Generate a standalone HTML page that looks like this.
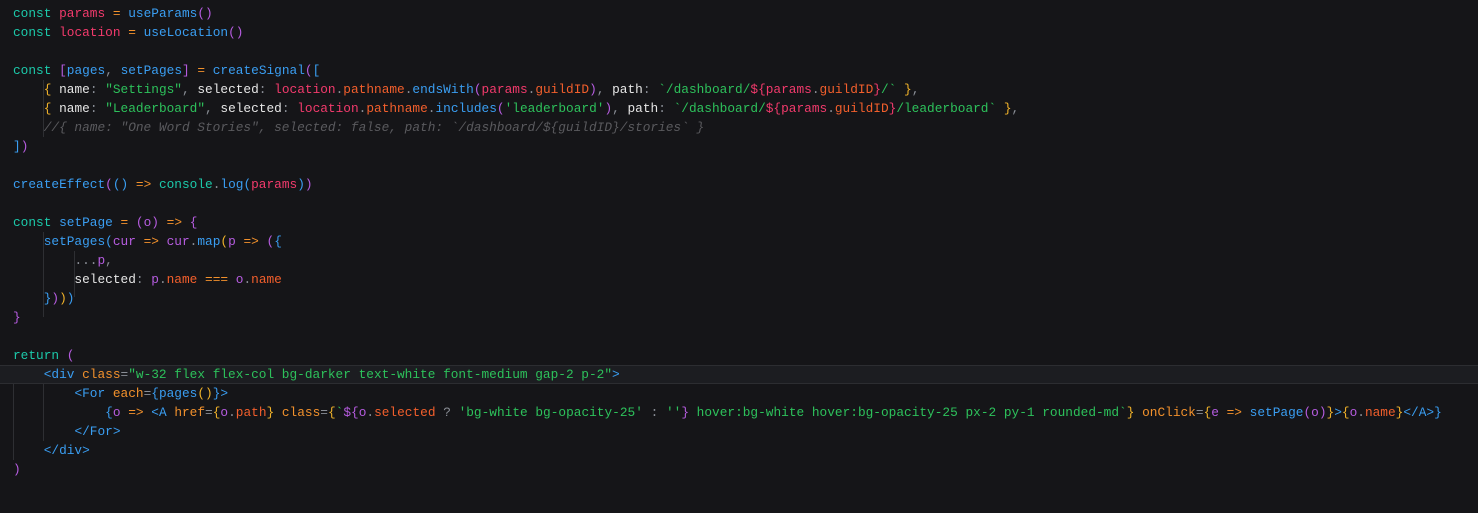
<!DOCTYPE html>
<html><head><meta charset="utf-8"><style>
html,body{margin:0;background:#151518;width:1478px;height:513px;overflow:hidden}
.c{position:absolute;left:0;top:4px;width:1478px;font:12.8px/19px "Liberation Mono",monospace;color:#e6e6e6}
.l{height:19px;padding-left:13px;position:relative;white-space:pre}
.cur{background:#1c1d21;box-shadow:inset 0 1px #2c2d31,inset 0 -1px #2c2d31}
.k{color:#1cc9aa}.v{color:#f23a6c}.f{color:#3a9ef2}.s{color:#2dc15b}.o{color:#f2912c}.r{color:#f35f2c}
.p{color:#b65ce0}.y{color:#f0b22a}.b{color:#3a9ef2}.g{color:#8a8e96}.cm{color:#5a5a5e;font-style:italic}
.ig{position:absolute;width:1px;background:#2e2f33}
</style></head><body>
<div class="ig" style="left:43px;top:80px;height:57px"></div>
<div class="ig" style="left:43px;top:232px;height:85px"></div>
<div class="ig" style="left:74px;top:251px;height:46px"></div>
<div class="ig" style="left:13px;top:365px;height:95px"></div>
<div class="ig" style="left:43px;top:384px;height:57px"></div>
<div class="c"><div class="l"><span class="k">const</span> <span class="v">params</span> <span class="o">=</span> <span class="f">useParams</span><span class="p">()</span></div><div class="l"><span class="k">const</span> <span class="v">location</span> <span class="o">=</span> <span class="f">useLocation</span><span class="p">()</span></div><div class="l"></div><div class="l"><span class="k">const</span> <span class="p">[</span><span class="f">pages</span><span class="g">,</span> <span class="f">setPages</span><span class="p">]</span> <span class="o">=</span> <span class="f">createSignal</span><span class="p">(</span><span class="b">[</span></div><div class="l">    <span class="y">{</span> name<span class="g">:</span> <span class="s">"Settings"</span><span class="g">,</span> selected<span class="g">:</span> <span class="v">location</span><span class="g">.</span><span class="r">pathname</span><span class="g">.</span><span class="f">endsWith</span><span class="p">(</span><span class="v">params</span><span class="g">.</span><span class="r">guildID</span><span class="p">)</span><span class="g">,</span> path<span class="g">:</span> <span class="s">`/dashboard/</span><span class="v">${</span><span class="v">params</span><span class="g">.</span><span class="r">guildID</span><span class="v">}</span><span class="s">/`</span> <span class="y">}</span><span class="g">,</span></div><div class="l">    <span class="y">{</span> name<span class="g">:</span> <span class="s">"Leaderboard"</span><span class="g">,</span> selected<span class="g">:</span> <span class="v">location</span><span class="g">.</span><span class="r">pathname</span><span class="g">.</span><span class="f">includes</span><span class="p">(</span><span class="s">'leaderboard'</span><span class="p">)</span><span class="g">,</span> path<span class="g">:</span> <span class="s">`/dashboard/</span><span class="v">${</span><span class="v">params</span><span class="g">.</span><span class="r">guildID</span><span class="v">}</span><span class="s">/leaderboard`</span> <span class="y">}</span><span class="g">,</span></div><div class="l">    <span class="cm">//{ name: "One Word Stories", selected: false, path: `/dashboard/${guildID}/stories` }</span></div><div class="l"><span class="b">]</span><span class="p">)</span></div><div class="l"></div><div class="l"><span class="f">createEffect</span><span class="p">(</span><span class="b">()</span> <span class="o">=&gt;</span> <span class="k">console</span><span class="g">.</span><span class="f">log</span><span class="b">(</span><span class="v">params</span><span class="b">)</span><span class="p">)</span></div><div class="l"></div><div class="l"><span class="k">const</span> <span class="f">setPage</span> <span class="o">=</span> <span class="p">(</span><span class="p">o</span><span class="p">)</span> <span class="o">=&gt;</span> <span class="p">{</span></div><div class="l">    <span class="f">setPages</span><span class="b">(</span><span class="p">cur</span> <span class="o">=&gt;</span> <span class="p">cur</span><span class="g">.</span><span class="f">map</span><span class="y">(</span><span class="p">p</span> <span class="o">=&gt;</span> <span class="p">(</span><span class="b">{</span></div><div class="l">        <span class="g">...</span><span class="p">p</span><span class="g">,</span></div><div class="l">        selected<span class="g">:</span> <span class="p">p</span><span class="g">.</span><span class="r">name</span> <span class="o">===</span> <span class="p">o</span><span class="g">.</span><span class="r">name</span></div><div class="l">    <span class="b">}</span><span class="p">)</span><span class="y">)</span><span class="b">)</span></div><div class="l"><span class="p">}</span></div><div class="l"></div><div class="l"><span class="k">return</span> <span class="p">(</span></div><div class="l cur">    <span class="b">&lt;div</span> <span class="o">class</span><span class="g">=</span><span class="s">"w-32 flex flex-col bg-darker text-white font-medium gap-2 p-2"</span><span class="b">&gt;</span></div><div class="l">        <span class="b">&lt;For</span> <span class="o">each</span><span class="g">=</span><span class="b">{</span><span class="f">pages</span><span class="y">()</span><span class="b">}</span><span class="b">&gt;</span></div><div class="l">            <span class="b">{</span><span class="p">o</span> <span class="o">=&gt;</span> <span class="b">&lt;A</span> <span class="o">href</span><span class="g">=</span><span class="y">{</span><span class="p">o</span><span class="g">.</span><span class="r">path</span><span class="y">}</span> <span class="o">class</span><span class="g">=</span><span class="y">{</span><span class="s">`</span><span class="p">${</span><span class="p">o</span><span class="g">.</span><span class="r">selected</span> <span class="g">?</span> <span class="s">'bg-white bg-opacity-25'</span> <span class="g">:</span> <span class="s">''</span><span class="p">}</span><span class="s"> hover:bg-white hover:bg-opacity-25 px-2 py-1 rounded-md`</span><span class="y">}</span> <span class="o">onClick</span><span class="g">=</span><span class="y">{</span><span class="p">e</span> <span class="o">=&gt;</span> <span class="f">setPage</span><span class="p">(</span><span class="p">o</span><span class="p">)</span><span class="y">}</span><span class="b">&gt;</span><span class="y">{</span><span class="p">o</span><span class="g">.</span><span class="r">name</span><span class="y">}</span><span class="b">&lt;/A&gt;</span><span class="b">}</span></div><div class="l">        <span class="b">&lt;/For&gt;</span></div><div class="l">    <span class="b">&lt;/div&gt;</span></div><div class="l"><span class="p">)</span></div></div>
</body></html>
